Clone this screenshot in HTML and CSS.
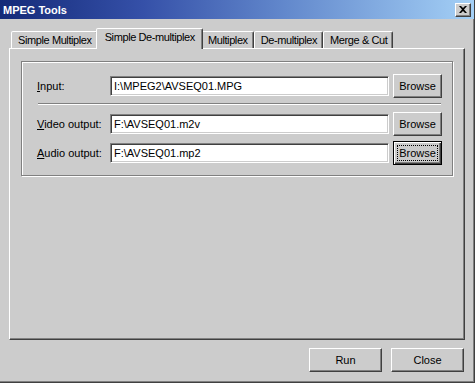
FILE: index.html
```html
<html>
<head>
  <title>MPEG Tools</title>
  <meta name="viewport" content="width=device-width">
  <link rel="stylesheet" href="styles.css">
</head>
<body>

<div class="window">
  <div class="titlebar">
    <span class="title">MPEG Tools</span>
    <button class="close-box" aria-label="Close">
      <svg width="8" height="7" viewBox="0 0 8 7"><path d="M0 0h2l2 2 2-2h2L5 3.5 8 7H6L4 5 2 7H0l3-3.5z" fill="#000"/></svg>
    </button>
  </div>

  <div class="content">
    <div class="tabs">
      <div class="tab">Simple Multiplex</div>
      <div class="tab selected">Simple De-multiplex</div>
      <div class="tab">Multiplex</div>
      <div class="tab">De-multiplex</div>
      <div class="tab">Merge &amp; Cut</div>
    </div>

    <section class="panel">
      <div class="group">
        <div class="row">
          <label><u>I</u>nput:</label>
          <div class="field">I:\MPEG2\AVSEQ01.MPG</div>
          <button class="btn">Browse</button>
        </div>
        <div class="separator"></div>
        <div class="row">
          <label><u>V</u>ideo output:</label>
          <div class="field">F:\AVSEQ01.m2v</div>
          <button class="btn">Browse</button>
        </div>
        <div class="row">
          <label><u>A</u>udio output:</label>
          <div class="field">F:\AVSEQ01.mp2</div>
          <button class="btn focused"><span>Browse</span></button>
        </div>
      </div>
    </section>

    <div class="actions">
      <button class="btn wide">Run</button>
      <button class="btn wide">Close</button>
    </div>
  </div>
</div>

</body>
</html>
```

FILE: styles.css
```css
* { box-sizing: border-box; }
html, body { margin: 0; padding: 0; }
body { font-family: "Liberation Sans", Arial, sans-serif; font-size: 11px; color: #000; background: #ccc; }

.window { width: 475px; height: 383px; display: flex; flex-direction: column; background: #cccccc;
  border-right: 1px solid #404040; border-bottom: 1px solid #404040;
  box-shadow: inset -1px -1px #808080; }

.titlebar { height: 19px; flex: none; display: flex; align-items: center; justify-content: space-between;
  padding: 0 3px 0 3px; background: linear-gradient(to right, #142a78 0%, #3550a8 30%, #6288cc 60%, #a4d0f6 100%); }
.title { color: #fff; font-weight: bold; font-size: 11px; }
.close-box { width: 16px; height: 14px; padding: 0; margin: 0; background: #ccc; display: flex; align-items: center; justify-content: center;
  border: 1px solid; border-color: #fff #404040 #404040 #fff; box-shadow: inset -1px -1px #808080; }

.content { flex: 1; display: flex; flex-direction: column; padding: 9px 9px 0 9px; }

.tabs { display: flex; align-items: flex-end; height: 20px; padding-left: 2px; position: relative; z-index: 1; }
.tab { height: 17px; padding: 1px 5px 0 6px; line-height: 14px; white-space: nowrap; letter-spacing: -0.4px; background: #ccc;
  border: 1px solid; border-bottom: none; border-color: #fff #404040 transparent #fff;
  border-radius: 2px 2px 0 0; box-shadow: inset -1px 0 #808080; }
.tab.selected { height: 21px; margin: 0 -2px -1px; padding: 0 7px 0 8px; position: relative; z-index: 2; line-height: 16px; }

.panel { height: 292px; flex: none; background: #ccc; padding: 12px 11px 0 11px;
  border: 1px solid; border-color: #fff #404040 #404040 #fff; box-shadow: inset -1px -1px #808080; }

.group { border: 1px solid #808080; box-shadow: inset 1px 1px #fff, 1px 1px #fff;
  padding: 12px 10px 10px 15px; display: flex; flex-direction: column; gap: 5px; }

.row { display: flex; align-items: center; height: 24px; }
.row label { width: 73px; flex: none; }
.field { width: 280px; height: 20px; margin-right: 4px; background: #fff; padding: 3px 3px 0;
  border: 1px solid; border-color: #808080 #fff #fff #808080;
  box-shadow: inset 1px 1px #404040, inset -1px -1px #ccc; }

.separator { height: 2px; border-top: 1px solid #808080; border-bottom: 1px solid #fff; margin: 0 1px 2px 1px; }

.btn { width: 49px; height: 24px; padding: 0; font: inherit; color: #000; background: #ccc;
  border: 1px solid; border-color: #fff #404040 #404040 #fff; box-shadow: inset -1px -1px #808080; }
.btn.focused { border: 1px solid #000; box-shadow: inset 1px 1px #fff, inset -1px -1px #404040, inset -2px -2px #808080; padding: 3px; }
.btn.focused span { display: block; height: 100%; line-height: 14px; border: 1px dotted #000; }

.actions { display: flex; justify-content: flex-end; gap: 9px; margin-top: 8px; padding-right: 1px; }
.btn.wide { width: 73px; }
```
